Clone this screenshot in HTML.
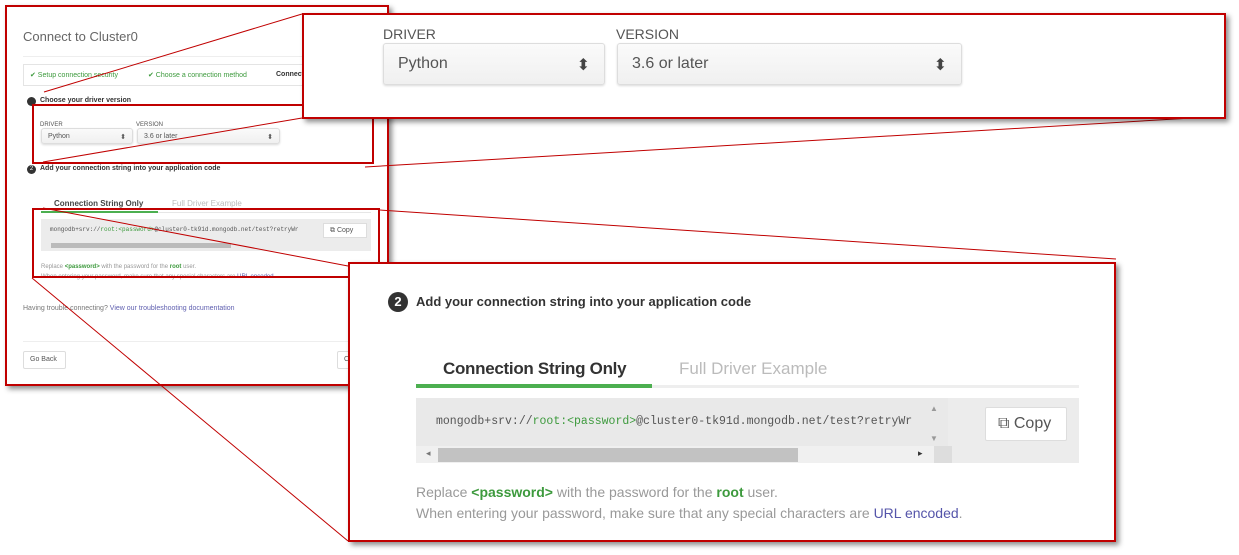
<!DOCTYPE html>
<html><head><style>
*{margin:0;padding:0;box-sizing:border-box}
body{width:1239px;height:555px;background:#fff;position:relative;overflow:hidden;font-family:"Liberation Sans",sans-serif;color:#555}
.abs{position:absolute}
.frame{border:2px solid #c00000;background:#fff;box-shadow:3px 3px 5px rgba(0,0,0,.45)}
.sel{border:1px solid #ddd;border-radius:3px;background:linear-gradient(#fafafa,#f0f0f0);box-shadow:0 1px 2px rgba(0,0,0,.15)}
.g{color:#3d9a3d}
.mono{font-family:"Liberation Mono",monospace}
</style></head><body>

<!-- main frame -->
<div class="abs frame" style="left:5px;top:5px;width:384px;height:381px">
  <div class="abs" style="left:16px;top:22px;font-size:13px;color:#666">Connect to Cluster0</div>
  <div class="abs" style="left:16px;top:49px;width:360px;height:1px;background:#eee"></div>
  <div class="abs" style="left:16px;top:57px;width:360px;height:22px;border:1px solid #e4e4e4;font-size:7px">
    <span class="abs g" style="left:6px;top:6px">✔ Setup connection security</span>
    <span class="abs g" style="left:124px;top:6px">✔ Choose a connection method</span>
    <span class="abs" style="left:252px;top:6px;color:#333;font-weight:bold">Connect</span>
  </div>
  <div class="abs" style="left:20px;top:90px;width:9px;height:9px;border-radius:50%;background:#333"></div>
  <div class="abs" style="left:33px;top:90px;font-size:7px;font-weight:bold;color:#333">Choose your driver version</div>
  <div class="abs" style="left:33px;top:115px;font-size:6px;color:#555">DRIVER</div>
  <div class="abs" style="left:129px;top:115px;font-size:6px;color:#555">VERSION</div>
  <div class="abs sel" style="left:34px;top:121px;width:92px;height:16px;font-size:7px;padding:4px 6px">Python<span style="float:right">⬍</span></div>
  <div class="abs sel" style="left:130px;top:121px;width:143px;height:16px;font-size:7px;padding:4px 6px">3.6 or later<span style="float:right">⬍</span></div>
  <div class="abs" style="left:20px;top:158px;width:9px;height:9px;border-radius:50%;background:#333;color:#fff;font-size:6px;text-align:center;line-height:9px">2</div>
  <div class="abs" style="left:33px;top:158px;font-size:7px;font-weight:bold;color:#333">Add your connection string into your application code</div>
  <div class="abs" style="left:47px;top:192px;font-size:8px;font-weight:bold;color:#444">Connection String Only</div>
  <div class="abs" style="left:165px;top:192px;font-size:8px;color:#bbb">Full Driver Example</div>
  <div class="abs" style="left:34px;top:205px;width:330px;height:1px;background:#e6e6e6"></div>
  <div class="abs" style="left:34px;top:204px;width:117px;height:2px;background:#4caf50"></div>
  <div class="abs" style="left:34px;top:212px;width:330px;height:32px;background:#ececec"></div>
  <div class="abs mono" style="left:43px;top:219px;font-size:6px;color:#555;white-space:nowrap">mongodb+srv://<span class="g">root:&lt;password&gt;</span>@cluster0-tk91d.mongodb.net/test?retryWr</div>
  <div class="abs" style="left:44px;top:236px;width:180px;height:5px;background:#bbb"></div>
  <div class="abs" style="left:316px;top:216px;width:44px;height:15px;background:#fff;border:1px solid #ddd;font-size:7px;padding:3px 6px">⧉ Copy</div>
  <div class="abs" style="left:34px;top:257px;font-size:6px;color:#999">Replace <b class="g">&lt;password&gt;</b> with the password for the <b class="g">root</b> user.</div>
  <div class="abs" style="left:34px;top:267px;font-size:6px;color:#999">When entering your password, make sure that any special characters are <span style="color:#5a5aa8">URL encoded</span></div>
  <div class="abs" style="left:16px;top:298px;font-size:7px;color:#777">Having trouble connecting? <span style="color:#6060b0">View our troubleshooting documentation</span></div>
  <div class="abs" style="left:16px;top:334px;width:360px;height:1px;background:#eee"></div>
  <div class="abs" style="left:16px;top:344px;width:43px;height:18px;border:1px solid #ddd;border-radius:2px;font-size:7px;padding:4px 6px;color:#555">Go Back</div>
  <div class="abs" style="left:330px;top:344px;width:43px;height:18px;border:1px solid #ddd;border-radius:2px;font-size:7px;padding:4px 6px;color:#555">C</div>
</div>

<!-- highlight boxes -->
<div class="abs" style="left:32px;top:104px;width:342px;height:60px;border:2px solid #c00000"></div>
<div class="abs" style="left:32px;top:208px;width:348px;height:70px;border:2px solid #c00000"></div>

<svg class="abs" style="left:0;top:0" width="1239" height="555">
<g stroke="#c00000" stroke-width="1">
<line x1="44" y1="92" x2="302" y2="14"/>
<line x1="43" y1="162" x2="302" y2="118"/>
<line x1="365" y1="167" x2="1226" y2="116"/>
<line x1="43" y1="208" x2="348" y2="266"/>
<line x1="380" y1="210" x2="1116" y2="259"/>
<line x1="32" y1="278" x2="348" y2="541"/>
</g></svg>

<!-- top zoom panel -->
<div class="abs frame" style="left:302px;top:13px;width:924px;height:106px">
  <div class="abs" style="left:79px;top:11px;font-size:14px;color:#555">DRIVER</div>
  <div class="abs" style="left:312px;top:11px;font-size:14px;color:#555">VERSION</div>
  <div class="abs sel" style="left:79px;top:28px;width:222px;height:42px;font-size:16px;padding:11px 14px;color:#555">Python<span style="float:right;color:#444">⬍</span></div>
  <div class="abs sel" style="left:313px;top:28px;width:345px;height:42px;font-size:16px;padding:11px 14px;color:#555">3.6 or later<span style="float:right;color:#444">⬍</span></div>
</div>

<!-- bottom zoom panel -->
<div class="abs frame" style="left:348px;top:262px;width:768px;height:280px">
  <div class="abs" style="left:38px;top:28px;width:20px;height:20px;border-radius:50%;background:#333;color:#fff;font-size:13px;font-weight:bold;text-align:center;line-height:20px">2</div>
  <div class="abs" style="left:66px;top:30px;font-size:13px;font-weight:bold;color:#333">Add your connection string into your application code</div>
  <div class="abs" style="left:93px;top:95px;font-size:17px;color:#333;font-weight:bold;letter-spacing:-.3px">Connection String Only</div>
  <div class="abs" style="left:329px;top:95px;font-size:17px;color:#bbb">Full Driver Example</div>
  <div class="abs" style="left:66px;top:121px;width:663px;height:3px;background:#eee"></div>
  <div class="abs" style="left:66px;top:120px;width:236px;height:4px;background:#4caf50"></div>
  <div class="abs" style="left:66px;top:134px;width:663px;height:65px;background:#ececec"></div>
  <div class="abs" style="left:66px;top:134px;width:532px;height:48px;background:#e9e9e9"></div>
  <div class="abs mono" style="left:86px;top:151px;font-size:11.5px;color:#555;white-space:nowrap;width:500px;overflow:hidden">mongodb+srv://<span class="g">root:&lt;password&gt;</span>@cluster0-tk91d.mongodb.net/test?retryWr</div>
  <div class="abs" style="left:580px;top:140px;font-size:8px;color:#999">▲</div>
  <div class="abs" style="left:580px;top:170px;font-size:8px;color:#999">▼</div>
  <div class="abs" style="left:66px;top:182px;width:532px;height:17px;background:#f0f0f0"></div>
  <div class="abs" style="left:88px;top:184px;width:360px;height:14px;background:#c2c2c2"></div>
  <div class="abs" style="left:76px;top:184px;font-size:9px;color:#777">◂</div>
  <div class="abs" style="left:568px;top:184px;font-size:9px;color:#333">▸</div>
  <div class="abs" style="left:584px;top:182px;width:18px;height:17px;background:#ddd"></div>
  <div class="abs" style="left:635px;top:143px;width:82px;height:34px;background:#fff;border:1px solid #ddd;border-radius:2px;font-size:16px;padding:7px 12px;color:#555">⧉ Copy</div>
  <div class="abs" style="left:66px;top:220px;font-size:14px;color:#999">Replace <b class="g">&lt;password&gt;</b> with the password for the <b class="g">root</b> user.</div>
  <div class="abs" style="left:66px;top:241px;font-size:14px;color:#999">When entering your password, make sure that any special characters are <span style="color:#5555aa">URL encoded</span>.</div>
</div>

</body></html>
